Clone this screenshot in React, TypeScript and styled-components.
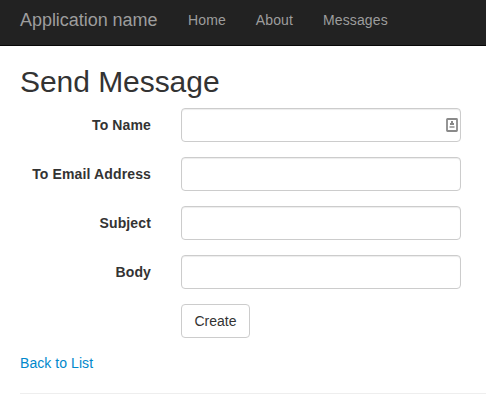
import React from "react";
import styled, { createGlobalStyle } from "styled-components";

const Global = createGlobalStyle`
  * { box-sizing: border-box; }
  body {
    margin: 0;
    background: #fff;
    color: #333;
    font: 14px/20px "Liberation Sans", Arial, sans-serif;
    overflow: hidden;
  }
`;

const Navbar = styled.nav`
  display: flex;
  height: 46px;
  padding-left: 20px;
  background: #222;
  border-bottom: 1px solid #080808;
`;

const Brand = styled.a`
  width: 153px;
  padding-top: 10px;
  font-size: 18px;
  letter-spacing: -0.04px;
  color: #9d9d9d;
  white-space: nowrap;
`;

const NavLink = styled.a`
  padding: 10px 15px;
  letter-spacing: 0.12px;
  color: #9d9d9d;
`;

const Page = styled.main`
  padding-left: 20px;
`;

const Title = styled.h2`
  margin: 19px 0 10px;
  font-size: 30px;
  line-height: 33px;
  font-weight: 400;
  letter-spacing: -0.05px;
`;

const Row = styled.div`
  display: grid;
  grid-template-columns: 131px 280px;
  column-gap: 30px;
  margin-bottom: 15px;
`;

const Label = styled.label`
  padding-top: 7px;
  text-align: right;
  font-weight: 700;
  letter-spacing: 0.13px;
`;

const Field = styled.div`
  display: flex;
  align-items: center;
  height: 34px;
  padding-right: 2px;
  border: 1px solid #ccc;
  border-radius: 4px;
  box-shadow: inset 0 1px 1px rgba(0, 0, 0, 0.075);
`;

const Input = styled.input`
  flex: 1;
  min-width: 0;
  height: 100%;
  padding: 0 12px;
  border: 0;
  outline: 0;
  background: transparent;
  color: #555;
  font: inherit;
`;

const Button = styled.button`
  grid-column: 2;
  justify-self: start;
  width: 69px;
  height: 34px;
  padding: 0;
  border: 1px solid #ccc;
  border-radius: 4px;
  background: #fff;
  color: #333;
  font: inherit;
`;

const BackLink = styled.a`
  display: block;
  letter-spacing: 0.06px;
  color: #0088cc;
`;

const Rule = styled.hr`
  margin: 20px 0 0;
  border: 0;
  border-top: 1px solid #eee;
`;

const ContactIcon = () => (
  <svg width="12" height="14" viewBox="0 0 12 14" fill="none">
    <rect x="1" y="1" width="10" height="12" rx="0.5" stroke="#8a8a8a" strokeWidth="1.8" />
    <rect x="5" y="3" width="2" height="2" fill="#888" />
    <rect x="4" y="5" width="4" height="2" fill="#888" />
    <rect x="3.5" y="8" width="5" height="2" fill="#aaa" />
  </svg>
);

const fields = ["To Name", "To Email Address", "Subject", "Body"];

export default function App() {
  return (
    <>
      <Global />
      <Navbar>
        <Brand>Application name</Brand>
        <NavLink>Home</NavLink>
        <NavLink>About</NavLink>
        <NavLink>Messages</NavLink>
      </Navbar>
      <Page>
        <Title>Send Message</Title>
        {fields.map((name, i) => (
          <Row key={name}>
            <Label htmlFor={`field-${i}`}>{name}</Label>
            <Field>
              <Input id={`field-${i}`} />
              {i === 0 && <ContactIcon />}
            </Field>
          </Row>
        ))}
        <Row>
          <Button>Create</Button>
        </Row>
        <BackLink>Back to List</BackLink>
        <Rule />
      </Page>
    </>
  );
}
